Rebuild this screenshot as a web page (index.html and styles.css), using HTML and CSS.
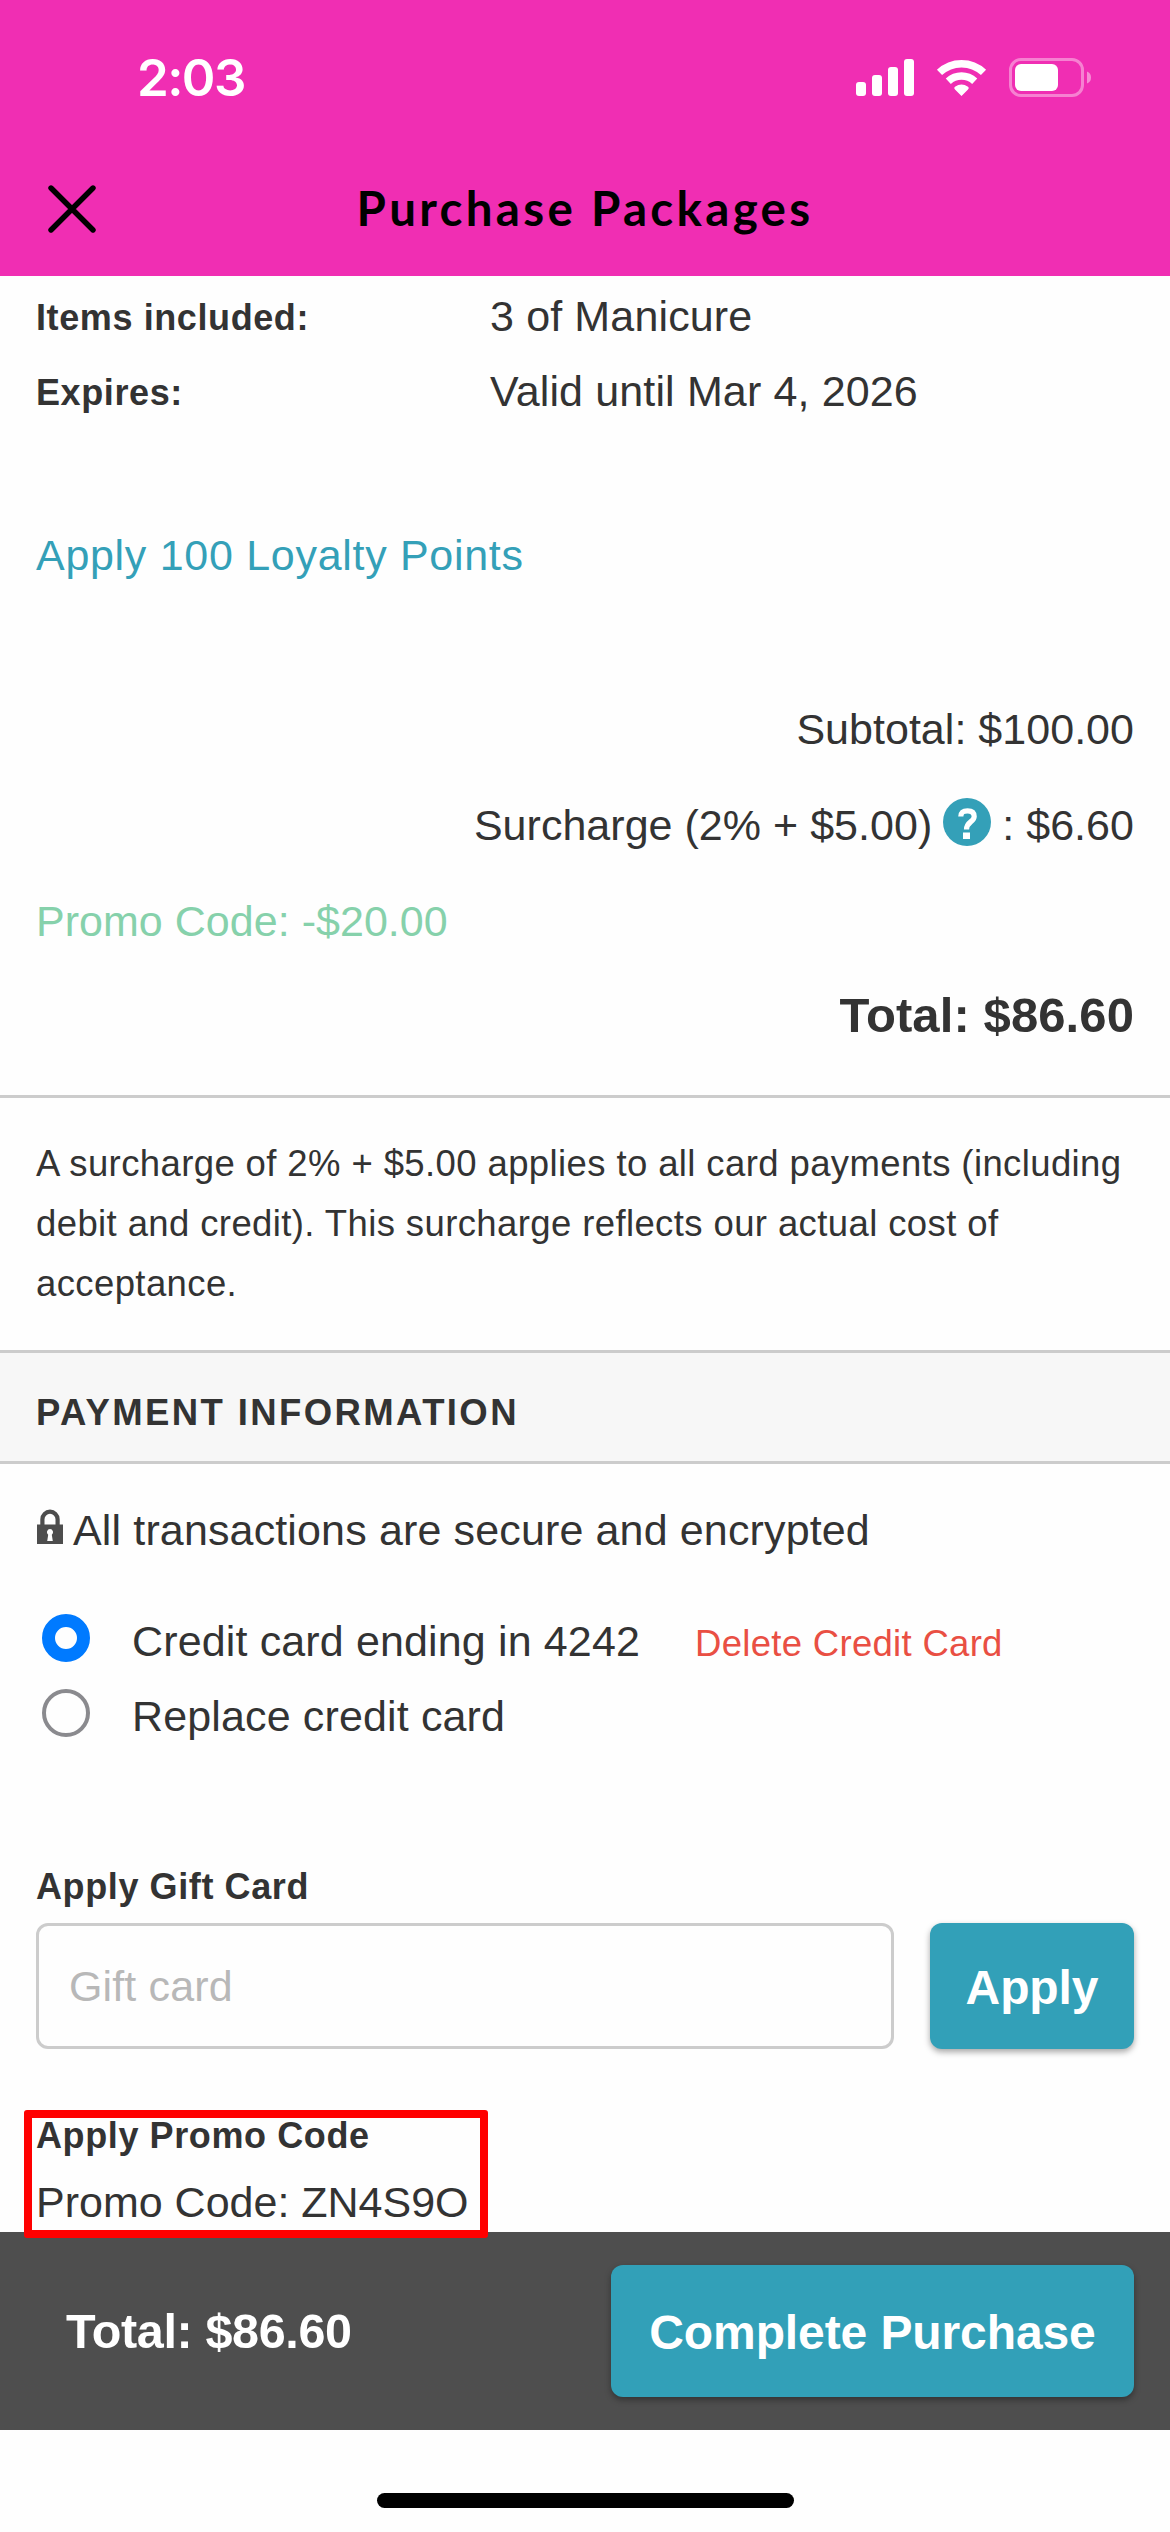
FILE: index.html
```html
<!DOCTYPE html>
<html lang="en">
<head>
<meta charset="utf-8">
<title>Purchase Packages</title>
<link rel="stylesheet" href="styles.css">
</head>
<body>
<header class="top">
  <div class="status">
    <span class="clock">2:03</span>
    <svg class="status-icons" width="236" height="40" viewBox="856 58 236 40" aria-hidden="true">
      <g fill="#fff">
        <rect x="856" y="82" width="10" height="14" rx="3"/>
        <rect x="872" y="75" width="10" height="21" rx="3"/>
        <rect x="888" y="67" width="10" height="29" rx="3"/>
        <rect x="904" y="59" width="10" height="37" rx="3"/>
        <rect x="1015" y="64" width="43" height="27" rx="6"/>
        <path d="M961.500 96 L955 89.500 Q953.300 88 955 86.700 Q961.500 82.500 968 86.700 Q969.700 88 968 89.500 Z"/>
      </g>
      <path d="M939.500 72.400 A32 32 0 0 1 983.500 72.400" fill="none" stroke="#fff" stroke-width="7.500"/>
      <path d="M948.300 81.200 A19.500 19.500 0 0 1 974.700 81.200" fill="none" stroke="#fff" stroke-width="7.500"/>
      <rect x="1010.500" y="59.500" width="72" height="36" rx="10.500" fill="none" stroke="#fff" stroke-opacity=".4" stroke-width="3"/>
      <path d="M1087 71.500 Q1091 73 1091 77.500 Q1091 82 1087 83.500 Z" fill="#fff" fill-opacity=".45"/>
    </svg>
  </div>
  <div class="nav">
    <svg class="close" width="48" height="48" viewBox="0 0 48 48" aria-label="Close"><path d="M3 3 L45 45 M45 3 L3 45" stroke="#000" stroke-width="5.400" stroke-linecap="round"/></svg>
    <h1 class="title">Purchase Packages</h1>
  </div>
</header>

<main class="page">
  <dl class="details">
    <dt>Items included:</dt><dd>3 of Manicure</dd>
    <dt>Expires:</dt><dd>Valid until Mar 4, 2026</dd>
  </dl>
  <a class="loyalty">Apply 100 Loyalty Points</a>
  <section class="sums">
    <p class="sum">Subtotal: $100.00</p>
    <p class="sum"><span>Surcharge (2% + $5.00)</span><svg class="help" width="48" height="48" viewBox="0 0 48 48" aria-hidden="true"><circle cx="24" cy="24" r="24" fill="#34a0b8"/><path d="M17.800 18.500 C18 14 20.500 12.800 24.500 12.800 C29 12.800 31.200 15 31.200 18.500 C31.200 24 23.500 23.500 23.500 31.500" fill="none" stroke="#fff" stroke-width="5.200"/><rect x="20" y="34.500" width="7" height="6.500" fill="#fff"/></svg><span>: $6.60</span></p>
    <p class="sum promo">Promo Code: -$20.00</p>
    <p class="sum total">Total: $86.60</p>
  </section>
  <p class="notice">A surcharge of 2% + $5.00 applies to all card payments (including debit and credit). This surcharge reflects our actual cost of acceptance.</p>
  <h2 class="section">PAYMENT INFORMATION</h2>
  <p class="secure"><svg class="lock" width="26" height="36" viewBox="0 0 26 36" aria-hidden="true"><path d="M0 15.500 H3.300 V10.300 A9.700 9.700 0 0 1 22.700 10.300 V15.500 H26 V35 H0 Z M7.500 15.500 H18.500 V10.300 A5.500 5.500 0 0 0 7.500 10.300 Z M13 20 A3.200 3.200 0 0 0 11.200 25.700 L10.200 32 H15.800 L14.800 25.700 A3.200 3.200 0 0 0 13 20 Z" fill="#4d4d4d" fill-rule="evenodd"/></svg><span>All transactions are secure and encrypted</span></p>
  <div class="option"><i class="radio on"></i><span>Credit card ending in 4242</span><a class="delete">Delete Credit Card</a></div>
  <div class="option"><i class="radio"></i><span>Replace credit card</span></div>
  <h3 class="label gift-label">Apply Gift Card</h3>
  <div class="gift">
    <div class="field">Gift card</div>
    <button class="btn apply">Apply</button>
  </div>
  <div class="promo-box">
    <h3 class="label promo-label">Apply Promo Code</h3>
    <p class="code">Promo Code: ZN4S9O</p>
    <div class="highlight"></div>
  </div>
</main>

<footer class="bar">
  <span class="bar-total">Total: $86.60</span>
  <button class="btn complete">Complete Purchase</button>
</footer>
<div class="home"><i class="indicator"></i></div>
</body>
</html>
```
FILE: styles.css
```css
* { box-sizing: border-box; margin: 0; padding: 0; }
body {
  width: 1170px;
  height: 2532px;
  overflow: hidden;
  display: flex;
  flex-direction: column;
  background: #fefefe;
  color: #333;
  font-family: "Liberation Sans", Arial, sans-serif;
  font-size: 43px;
  letter-spacing: .14px;
  white-space: nowrap;
}
.top { height: 276px; background: #f02eb3; flex: none; }
.status {
  display: flex;
  justify-content: space-between;
  height: 98px;
  padding: 58px 78px 0 137px;
}
.clock {
  font: 600 51px/40px Inter, sans-serif;
  letter-spacing: -1.6px;
  color: #fff;
}
.nav {
  display: grid;
  grid-template-columns: 48px 1fr 48px;
  align-items: center;
  height: 50px;
  margin: 86px 48px 0;
}
.title {
  margin-top: -2px;
  font: 700 47.500px/50px Lato, sans-serif;
  letter-spacing: 3.300px;
  text-align: center;
  color: #000;
}
.page { height: 1956px; padding-top: 2px; flex: none; }
.details {
  display: grid;
  grid-template-columns: 454px 1fr;
  grid-auto-rows: 75px;
  padding: 0 36px;
  line-height: 76px;
}
.details dt, .label { font-size: 36px; font-weight: 700; letter-spacing: .6px; }
.details dt { line-height: 79px; }
.loyalty { display: block; margin-top: 90px; padding: 0 36px; line-height: 75px; letter-spacing: .7px; color: #34a0b8; }
.sums { margin-top: 88px; padding: 0 36px; height: 417px; border-bottom: 3px solid #ccc; letter-spacing: .03px; }
.sum { display: flex; justify-content: flex-end; align-items: center; height: 96px; line-height: 96px; }
.help { margin: -6px 11px 0 11px; }
.promo { justify-content: flex-start; color: #86d1ab; }
.total { align-items: flex-start; font-size: 49px; font-weight: 700; line-height: 92px; letter-spacing: .1px; }
.notice {
  height: 252px;
  padding: 36px 36px 0;
  font-size: 36.500px;
  line-height: 60px;
  letter-spacing: .39px;
  white-space: normal;
}
.section {
  height: 114px;
  padding: 6px 36px 0;
  border: solid #ccc;
  border-width: 3px 0;
  background: #f7f7f7;
  font-size: 36.500px;
  line-height: 108px;
  letter-spacing: 2.400px;
}
.secure { display: flex; align-items: center; gap: 10px; margin: 29px 36px 0 37px; height: 75px; }
.lock { margin-top: -8px; }
.option { display: flex; align-items: center; height: 75px; padding-left: 42px; }
.secure + .option { margin-top: 36px; }
.radio { width: 48px; height: 48px; margin: -7px 42px 0 0; border: 4px solid #8a8a8e; border-radius: 50%; }
.radio.on { border: 13.500px solid #007aff; }
.delete { margin-left: 55px; padding-top: 4px; font-size: 36.500px; letter-spacing: .3px; color: #e94f43; }
.gift-label { margin: 103px 36px 0; line-height: 60px; }
.gift { display: flex; gap: 36px; padding: 0 36px; margin-top: 6px; }
.field {
  flex: 1;
  height: 126px;
  padding-left: 30px;
  border: 3px solid #ccc;
  border-radius: 12px;
  line-height: 120px;
  color: #b8b8b8;
}
.btn {
  border: 0;
  border-radius: 12px;
  background: #32a0b8;
  box-shadow: 0 3px 6px rgba(0, 0, 0, .35);
  color: #fff;
  font: 700 48px/1.2 "Liberation Sans", Arial, sans-serif;
  letter-spacing: -.1px;
  text-align: center;
}
.apply { width: 204px; height: 126px; padding-top: 3px; }
.promo-box { position: relative; padding: 56.500px 36px 0; }
.promo-label { line-height: 60px; }
.code { line-height: 73px; letter-spacing: 0; }
.highlight {
  position: absolute;
  left: 24px;
  top: 61px;
  width: 464px;
  height: 128px;
  border: 8px solid #f00;
  border-radius: 3px;
}
.bar {
  display: flex;
  justify-content: space-between;
  align-items: center;
  flex: none;
  height: 198px;
  padding: 0 36px 0 66px;
  background: #4e4e4e;
  color: #fff;
}
.bar-total { font-size: 48.500px; font-weight: 700; letter-spacing: -.35px; }
.complete { width: 523px; height: 132px; padding-top: 3px; }
.home { display: flex; justify-content: center; padding-top: 63px; }
.indicator { width: 417px; height: 15px; border-radius: 8px; background: #000; }
```
